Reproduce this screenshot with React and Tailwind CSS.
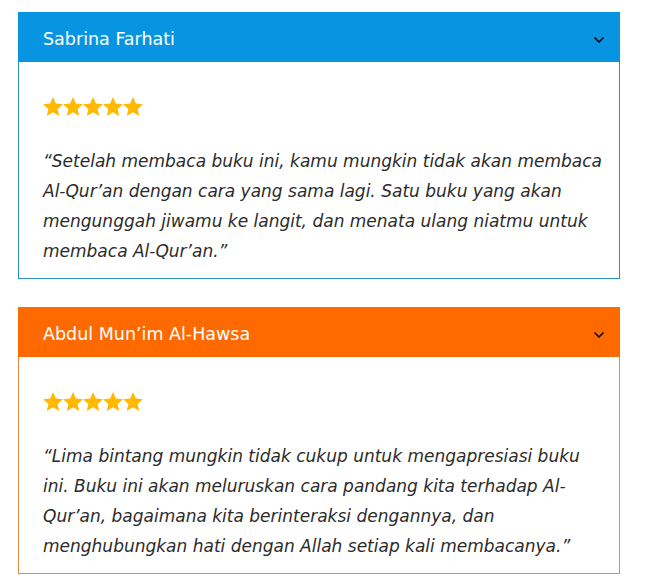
import React from 'react';
import { ChevronDown } from 'lucide-react';

const REVIEWS = [
  {
    name: 'Sabrina Farhati',
    head: 'bg-[#0795e2]',
    border: 'border-[#2a8fc6]',
    text: '“Setelah membaca buku ini, kamu mungkin tidak akan membaca Al-Qur’an dengan cara yang sama lagi. Satu buku yang akan mengunggah jiwamu ke langit, dan menata ulang niatmu untuk membaca Al-Qur’an.”',
  },
  {
    name: 'Abdul Mun’im Al-Hawsa',
    head: 'bg-[#ff6a00]',
    border: 'border-[#ea8a3c]',
    text: '“Lima bintang mungkin tidak cukup untuk mengapresiasi buku ini. Buku ini akan meluruskan cara pandang kita terhadap Al-Qur’an, bagaimana kita berinteraksi dengannya, dan menghubungkan hati dengan Allah setiap kali membacanya.”',
  },
];

function Stars() {
  return (
    <div className="flex h-5 items-center">
      {[0, 1, 2, 3, 4].map((i) => (
        <svg key={i} width="20" height="19" viewBox="1.2 1.5 21.6 20.5">
          <path
            fill="#ffb900"
            d="M12 1.5l3.1 7.1 7.7.7-5.8 5.1 1.7 7.6L12 18l-6.7 4 1.7-7.6-5.8-5.1 7.7-.7z"
          />
        </svg>
      ))}
    </div>
  );
}

export default function App() {
  return (
    <div className="min-h-screen bg-white pt-3 pl-[18px] font-['DejaVu_Sans',sans-serif]">
      <div className="w-[602px] flex flex-col gap-[28px]">
        {REVIEWS.map((r) => (
          <div key={r.name}>
            <div className={`${r.head} h-[50px] flex items-center justify-between pt-[5px] pl-[25px] pr-[13px]`}>
              <span className="text-white text-[17.5px]">{r.name}</span>
              <ChevronDown size={16} strokeWidth={2.5} className="text-black" />
            </div>
            <div className={`border ${r.border} border-t-0 pl-6 pr-3 pt-[34px] pb-[12px]`}>
              <Stars />
              <p className="mt-[30px] text-[17px] leading-[30px] italic text-[#2b2b2b]">{r.text}</p>
            </div>
          </div>
        ))}
      </div>
    </div>
  );
}
